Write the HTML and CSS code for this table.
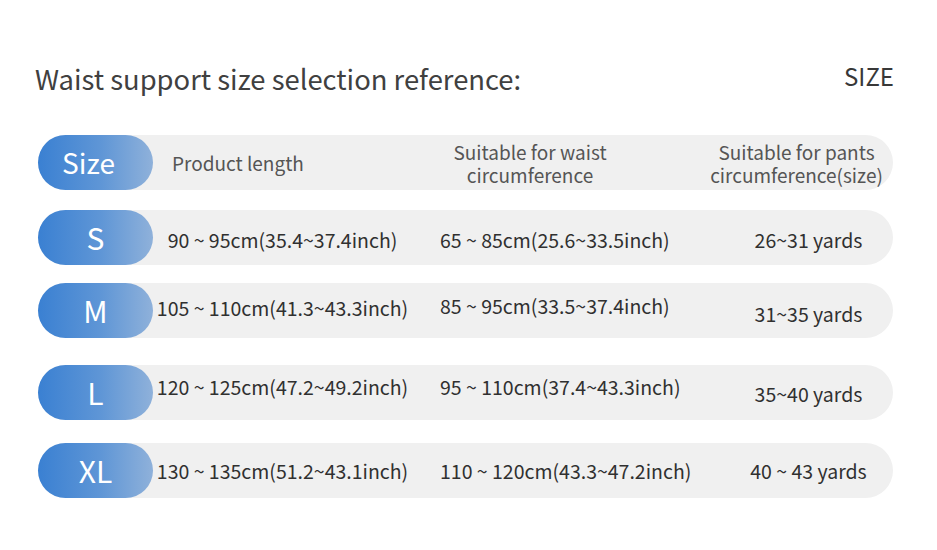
FILE: index.html
```html
<!DOCTYPE html>
<html lang="en">
<head>
<meta charset="utf-8">
<title>Waist support size selection reference</title>
<link rel="stylesheet" href="styles.css">
</head>
<body>
<div class="page">
  <div class="title-row">
    <h1 class="title">Waist support size selection reference:</h1>
    <div class="size-label">SIZE</div>
  </div>
  <div class="table">
    <div class="row row-head">
      <div class="pill pill-head">Size</div>
      <div class="c1 c1-head">Product length</div>
      <div class="c2 c2-head">Suitable for waist<br>circumference</div>
      <div class="c3 c3-head">Suitable for pants<br>circumference(size)</div>
    </div>
    <div class="row row-s">
      <div class="pill">S</div>
      <div class="c1 down2">90 ~ 95cm(35.4~37.4inch)</div>
      <div class="c2 down2">65 ~ 85cm(25.6~33.5inch)</div>
      <div class="c3 down2">26~31 yards</div>
    </div>
    <div class="row row-m">
      <div class="pill">M</div>
      <div class="c1 up3">105 ~ 110cm(41.3~43.3inch)</div>
      <div class="c2 up5">85 ~ 95cm(33.5~37.4inch)</div>
      <div class="c3 down3">31~35 yards</div>
    </div>
    <div class="row row-l">
      <div class="pill">L</div>
      <div class="c1 up6">120 ~ 125cm(47.2~49.2inch)</div>
      <div class="c2 up6">95 ~ 110cm(37.4~43.3inch)</div>
      <div class="c3">35~40 yards</div>
    </div>
    <div class="row row-xl">
      <div class="pill">XL</div>
      <div class="c1">130 ~ 135cm(51.2~43.1inch)</div>
      <div class="c2">110 ~ 120cm(43.3~47.2inch)</div>
      <div class="c3">40 ~ 43 yards</div>
    </div>
  </div>
</div>
</body>
</html>
```
FILE: styles.css
```css
* { box-sizing: border-box; }
html, body { margin: 0; padding: 0; background: #ffffff; }
body {
  font-family: "Noto Sans CJK SC", "Noto Sans", sans-serif;
  color: #333333;
}
.page {
  width: 937px;
  height: 550px;
  padding: 58px 43px 0 35px;
}
.title-row {
  display: flex;
  justify-content: space-between;
  align-items: flex-start;
  height: 77px;
}
.title {
  margin: 0;
  font-size: 27.4px;
  font-weight: 400;
  line-height: 41px;
  color: #404040;
}
.size-label {
  font-size: 24px;
  line-height: 40px;
  color: #383838;
  margin-top: -2px;
}
.table {
  margin-left: 3px;
  width: 855px;
  display: flex;
  flex-direction: column;
}
.row {
  display: grid;
  grid-template-columns: 115px 259px 288px 1fr;
  align-items: center;
  height: 55px;
  background: #f0f0f0;
  border-radius: 28px;
  font-size: 19.5px;
  line-height: 24px;
  color: #303030;
  white-space: nowrap;
}
.row-s { margin-top: 20px; }
.row-m { margin-top: 18px; }
.row-l { margin-top: 27px; }
.row-xl { margin-top: 23px; }
.pill {
  height: 55px;
  border-radius: 28px;
  background: linear-gradient(90deg, #3a80d2 0%, #5f96d6 55%, #8fb1da 100%);
  color: #ffffff;
  font-size: 30px;
  line-height: 55px;
  text-align: center;
}
.pill-head {
  font-size: 28px;
  padding-right: 14px;
}
.c1 { text-align: center; }
.c2 { text-align: left; padding-left: 28px; }
.c3 { text-align: center; padding-left: 24px; }
.row-head { color: #555555; font-size: 19px; line-height: 23px; }
.c1-head { text-align: left; padding-left: 19px; }
.c2-head { text-align: center; padding-left: 0; padding-right: 52px; }
.c3-head { padding-left: 0; }
.down2 { padding-top: 5px; }
.down3 { padding-top: 6px; }
.up3 { padding-bottom: 6px; }
.up5 { padding-bottom: 10px; }
.up6 { padding-bottom: 12px; }
.row-l .c3 { padding-top: 2px; }
```
